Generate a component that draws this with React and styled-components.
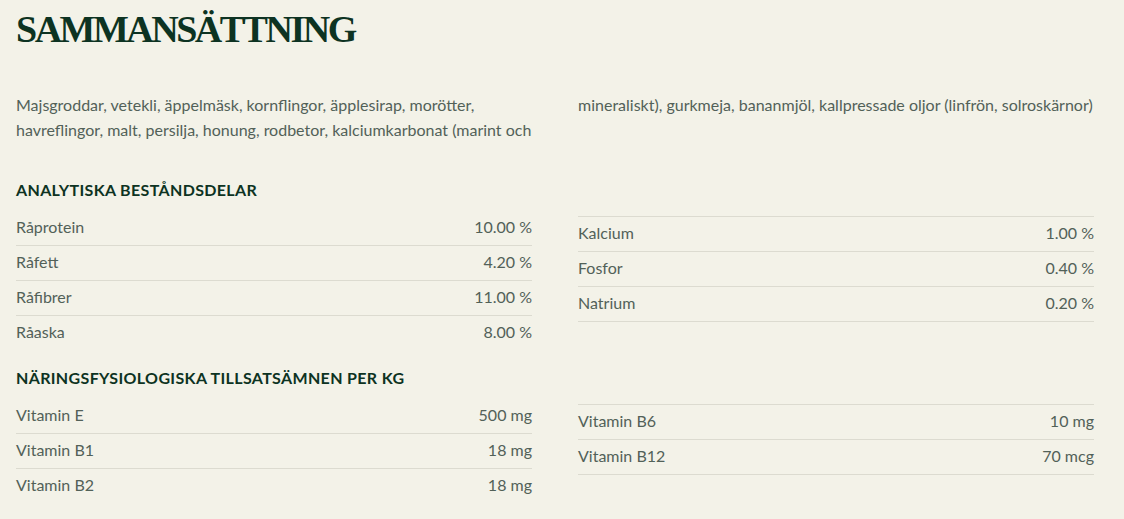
import React from 'react';
import styled, { createGlobalStyle } from 'styled-components';

const GlobalStyle = createGlobalStyle`
    html, body {
        margin:0;
        padding:0;
        background-color:#f3f2e8;
    }
    body {
        font-family:Lato, "Open Sans", sans-serif;
        color:#526158;
    }
`;

const Page = styled.main`
    width:1078px;
    padding:0 16px 20px 16px;
`;

const Title = styled.h1`
    margin:5px 0 0 0;
    font-family:"Liberation Serif", "Times New Roman", serif;
    font-weight:700;
    font-size:38px;
    line-height:48px;
    letter-spacing:-2.5px;
    color:#0d3322;
`;

const Ingredients = styled.p`
    margin:39px 0 0 0;
    column-count:2;
    column-gap:46px;
    font-size:16px;
    line-height:25px;
    font-weight:400;
`;

const Section = styled.section`
    display:grid;
    grid-template-columns:516px 516px;
    column-gap:46px;
    margin-top:${p => p.$top}px;
`;

const Column = styled.div`
    padding-top:${p => (p.$right ? 36 : 0)}px;
`;

const Heading = styled.h3`
    margin:0 0 11px 0;
    height:20px;
    font-size:16px;
    line-height:20px;
    font-weight:700;
    letter-spacing:0.35px;
    text-transform:uppercase;
    color:#0d3322;
`;

const Row = styled.div`
    display:flex;
    justify-content:space-between;
    align-items:center;
    height:34px;
    box-sizing:border-box;
    padding-bottom:3px;
    font-size:16px;
    border-bottom:1px solid #dcdbd0;
    ${p => p.$first && 'border-top:1px solid #dcdbd0; height:35px;'}
    ${p => p.$last && 'border-bottom:none;'}
    height:${p => (p.$first ? 36 : p.$last ? 34 : 35)}px;
`;

const Table = ({ rows, right }) => (
    <>
        {rows.map((r, i) => (
            <Row
                key={r[0]}
                $first={right && i === 0}
                $last={!right && i === rows.length - 1}
            >
                <span>{r[0]}</span>
                <span>{r[1]}</span>
            </Row>
        ))}
    </>
);

const analytic = [
    ['Råprotein', '10.00 %'],
    ['Råfett', '4.20 %'],
    ['Råfibrer', '11.00 %'],
    ['Råaska', '8.00 %'],
];
const analyticRight = [
    ['Kalcium', '1.00 %'],
    ['Fosfor', '0.40 %'],
    ['Natrium', '0.20 %'],
];
const vitamins = [
    ['Vitamin E', '500 mg'],
    ['Vitamin B1', '18 mg'],
    ['Vitamin B2', '18 mg'],
];
const vitaminsRight = [
    ['Vitamin B6', '10 mg'],
    ['Vitamin B12', '70 mcg'],
];

export default function App() {
    return (
        <Page>
            <GlobalStyle />
            <Title>SAMMANSÄTTNING</Title>
            <Ingredients>
                Majsgroddar, vetekli, äppelmäsk, kornflingor, äpplesirap, morötter, havreflingor, malt, persilja, honung, rodbetor, kalciumkarbonat (marint och mineraliskt), gurkmeja, bananmjöl, kallpressade oljor (linfrön, solroskärnor)
            </Ingredients>
            <Section $top={38}>
                <Column>
                    <Heading>Analytiska beståndsdelar</Heading>
                    <Table rows={analytic} />
                </Column>
                <Column $right>
                    <Table rows={analyticRight} right />
                </Column>
            </Section>
            <Section $top={18}>
                <Column>
                    <Heading>Näringsfysiologiska tillsatsämnen per kg</Heading>
                    <Table rows={vitamins} />
                </Column>
                <Column $right>
                    <Table rows={vitaminsRight} right />
                </Column>
            </Section>
        </Page>
    );
}
